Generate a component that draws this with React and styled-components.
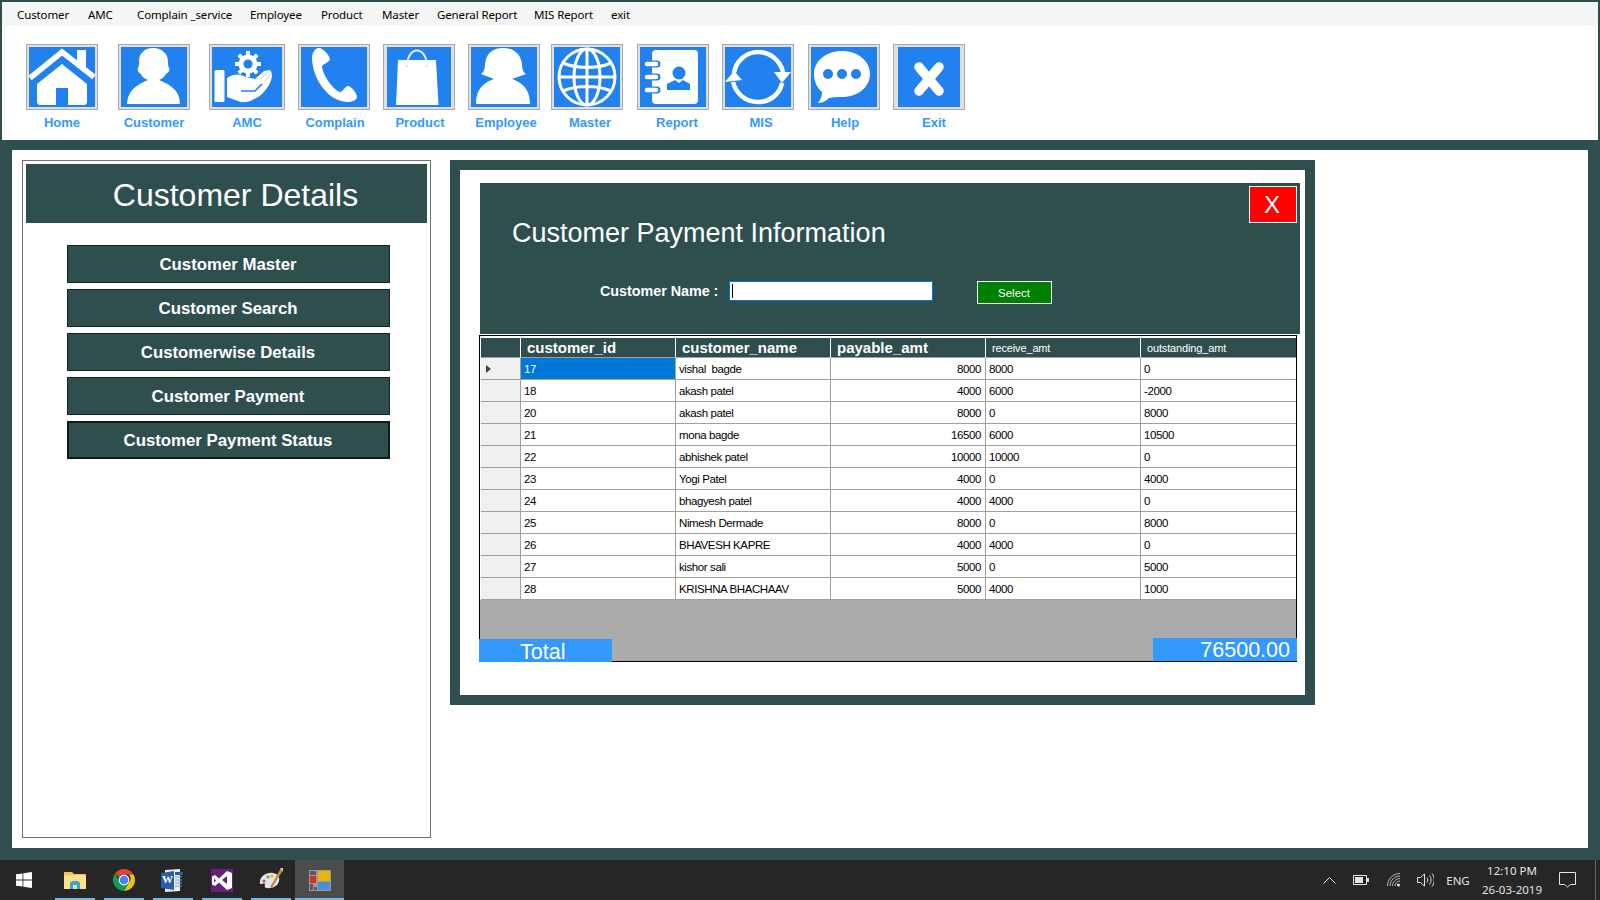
import React from "react";
import styled, { createGlobalStyle } from "styled-components";

const GlobalStyle = createGlobalStyle`
  html, body {
    margin: 0;
    padding: 0;
    background: #2f4f4f;
  }
  * {
    box-sizing: border-box;
  }
`;

const Page = styled.div`
  width: 1600px;
  height: 900px;
  display: flex;
  flex-direction: column;
  padding-top: 2px;
  background: #2f4f4f;
  overflow: hidden;
  font-family: "Liberation Sans", Arial, sans-serif;
`;

const MenuBar = styled.nav`
  height: 24px;
  margin: 0 2px;
  padding-left: 6px;
  display: flex;
  align-items: center;
  background: #f5f5f5;
  font-family: "Noto Sans", "Open Sans", sans-serif;
  font-size: 11.5px;
  letter-spacing: -0.12px;
  color: #000;
`;

const MenuItem = styled.span`
  width: ${(p) => p.$w}px;
  padding-left: 9px;
  white-space: nowrap;
`;

const ToolStrip = styled.div`
  height: 114px;
  margin: 0 2px;
  padding: 18px 0 0 24px;
  display: flex;
  background: #fff;
`;

const Tool = styled.div`
  margin-left: ${(p) => p.$gap}px;
  display: flex;
  flex-direction: column;
  align-items: center;
`;

const IconBox = styled.div`
  width: ${(p) => p.$w}px;
  height: 66px;
  display: flex;
  align-items: center;
  justify-content: center;
  background: #e0e0e0;
  border: 1px solid #a9a9a9;
`;

const IconArt = styled.svg`
  display: block;
  background: #2181ee;
`;

const ToolLabel = styled.span`
  margin-top: 5px;
  padding-left: ${(p) => (p.$shift || 0) * 2}px;
  line-height: 16px;
  font-size: 13px;
  font-weight: 700;
  color: #3399ff;
  white-space: nowrap;
`;

const Main = styled.main`
  height: 698px;
  margin: 10px 12px 0;
  padding: 10px;
  display: flex;
  background: #fff;
`;

const SidePanel = styled.aside`
  width: 409px;
  height: 678px;
  padding: 3px;
  border: 1px solid #707070;
`;

const SideHeader = styled.h1`
  height: 59px;
  margin: 0;
  padding: 4px 0 0 18px;
  display: flex;
  align-items: center;
  justify-content: center;
  background: #2f4f4f;
  color: #fff;
  font-size: 32px;
  font-weight: 400;
`;

const SideMenu = styled.div`
  width: 323px;
  margin: 22px 0 0 41px;
  display: flex;
  flex-direction: column;
  gap: 6px;
`;

const SideButton = styled.button`
  height: 38px;
  padding: 1px 1px 0 0;
  background: #2f4f4f;
  border: ${(p) => (p.$focused ? "2px solid #0c1c1c" : "1px solid #142424")};
  color: #fff;
  font-family: inherit;
  font-size: 16.8px;
  font-weight: 700;
`;

const ContentFrame = styled.section`
  width: 865px;
  height: 545px;
  margin-left: 19px;
  padding: 13px 5px 0 20px;
  border: 10px solid #2f4f4f;
  background: #fff;
`;

const FormHeader = styled.div`
  height: 151px;
  background: #2f4f4f;
  color: #fff;
`;

const TitleRow = styled.div`
  display: flex;
  justify-content: space-between;
  align-items: flex-start;
  padding: 3px 3px 0 32px;
`;

const FormTitle = styled.h2`
  margin: 31px 0 0;
  font-size: 27px;
  line-height: 32px;
  font-weight: 400;
`;

const CloseButton = styled.button`
  width: 48px;
  height: 37px;
  padding: 0 2px 0 0;
  background: #f00;
  border: 1px solid #fff;
  color: #fff;
  font-family: inherit;
  font-size: 24px;
`;

const SearchRow = styled.div`
  margin-top: 31px;
  display: flex;
  align-items: center;
  padding-left: 120px;
  height: 24px;
`;

const SearchLabel = styled.label`
  width: 129px;
  margin-top: -2px;
  font-size: 14.3px;
  font-weight: 700;
  white-space: nowrap;
`;

const SearchField = styled.div`
  width: 204px;
  height: 20px;
  margin-top: -2px;
  padding: 2px 0 0 2px;
  background: #fff;
  border: 1px solid #0078d7;
`;

const Caret = styled.div`
  width: 1px;
  height: 14px;
  background: #000;
`;

const SelectButton = styled.button`
  width: 75px;
  height: 23px;
  margin-left: 44px;
  padding: 1px 1px 0 0;
  background: #008000;
  border: 1px solid #fff;
  color: #fff;
  font-family: inherit;
  font-size: 11.5px;
`;

const GridWrap = styled.div`
  position: relative;
  width: 818px;
  height: 327px;
  margin: 1px 0 0 -1px;
  background: #ababab;
  border: 1px solid #000;
`;

const Table = styled.table`
  width: 816px;
  table-layout: fixed;
  border-collapse: separate;
  border-spacing: 0;
  border-top: 2px solid #fff;
  border-left: 1px solid #fff;
  background: #fff;
  font-size: 11.5px;
  letter-spacing: -0.4px;
  color: #000;
`;

const HeadCell = styled.th`
  height: 20px;
  padding: 0 0 0 6px;
  background: #2f4f4f;
  border-right: 1px solid #fff;
  border-bottom: 1px solid #a0a0a0;
  color: #fff;
  text-align: left;
  letter-spacing: ${(p) => (p.$small ? "-0.15px" : "0")};
  font-size: ${(p) => (p.$small ? "11px" : "15px")};
  font-weight: ${(p) => (p.$small ? 400 : 700)};
  &:last-child {
    border-right: 0;
  }
`;

const Cell = styled.td`
  height: 22px;
  padding: 0 4px 0 3px;
  border-right: 1px solid #a0a0a0;
  border-bottom: 1px solid #a0a0a0;
  text-align: ${(p) => (p.$right ? "right" : "left")};
  white-space: pre;
  background: ${(p) => (p.$active ? "#0078d7" : "#fff")};
  color: ${(p) => (p.$active ? "#fff" : "#000")};
  &:last-child {
    border-right: 0;
  }
`;

const RowHead = styled.td`
  height: 22px;
  padding: 0 0 0 5px;
  background: #f0f0f0;
  border-right: 1px solid #a0a0a0;
  border-bottom: 1px solid #a0a0a0;
`;

const RowArrow = styled.div`
  width: 0;
  height: 0;
  border-left: 5px solid #404040;
  border-top: 4px solid transparent;
  border-bottom: 4px solid transparent;
`;

const TotalBar = styled.div`
  position: absolute;
  left: -1px;
  right: -1px;
  bottom: -1px;
  display: flex;
  justify-content: space-between;
  align-items: flex-end;
`;

const TotalLabel = styled.div`
  width: 133px;
  height: 23px;
  padding-left: 41px;
  background: #3399ff;
  color: #fff;
  font-size: 21.5px;
  line-height: 27px;
`;

const TotalValue = styled.div`
  width: 144px;
  height: 23px;
  margin-bottom: 1px;
  padding-right: 7px;
  background: #3399ff;
  color: #fff;
  font-size: 21.5px;
  line-height: 25px;
  text-align: right;
`;

const Taskbar = styled.footer`
  height: 40px;
  margin-top: 12px;
  display: flex;
  align-items: stretch;
  background: #262626;
  color: #e4e4e4;
  font-family: "Noto Sans", "Open Sans", sans-serif;
`;

const StartButton = styled.div`
  width: 50px;
  display: flex;
  align-items: center;
  justify-content: center;
  padding-right: 2px;
`;

const TaskSlot = styled.div`
  position: relative;
  width: 49px;
  display: flex;
  align-items: center;
  justify-content: center;
  background: ${(p) => (p.$active ? "#4c4c4c" : "transparent")};
  &::after {
    content: "";
    position: absolute;
    left: ${(p) => (p.$active ? 0 : 5)}px;
    right: ${(p) => (p.$active ? 0 : 4)}px;
    bottom: 0;
    height: 2px;
    background: #76b9ed;
  }
`;

const Tray = styled.div`
  margin-left: auto;
  display: flex;
  align-items: stretch;
  padding-right: 4px;
`;

const TraySlot = styled.div`
  width: ${(p) => p.$w}px;
  display: flex;
  flex-direction: column;
  align-items: center;
  justify-content: center;
  font-size: 11.5px;
  line-height: 19px;
  white-space: nowrap;
`;

const TrayDivider = styled.div`
  width: 1px;
  margin-left: 10px;
  background: #666;
`;

const menus = [
  ["Customer", 71],
  ["AMC", 49],
  ["Complain _service", 113],
  ["Employee", 71],
  ["Product", 61],
  ["Master", 55],
  ["General Report", 97],
  ["MIS Report", 77],
  ["exit", 40],
];

const Gear = ({ cx, cy }) => (
  <g>
    {[0, 45, 90, 135, 180, 225, 270, 315].map((a) => (
      <rect key={a} x={cx - 2} y={cy - 13} width="4" height="5" fill="#fff" transform={`rotate(${a} ${cx} ${cy})`} />
    ))}
    <circle cx={cx} cy={cy} r="9.500" fill="#fff" />
    <circle cx={cx} cy={cy} r="4.500" fill="#2181ee" />
  </g>
);

const toolIcons = {
  home: (
    <>
      <path d="M48 3h9v18h-9z" fill="#fff" />
      <path d="M1 31 33 5l32 25" fill="none" stroke="#fff" strokeWidth="5.5" />
      <path d="M33 17 58 37v19l-2 2H10l-2-2V37zM27 41v17h12V41z" fill="#fff" fillRule="evenodd" />
    </>
  ),
  customer: (
    <path
      d="M32 1c9 0 15 6 15 13 0 3 0 5 1 7 1 3-1 5-3 6-2 3-3 4-5 5l-2 1c9 4 21 9 21 24H6c1-15 12-20 21-24l-2-1c-2-1-4-2-5-5-2-1-4-3-3-6 1-2 1-4 1-7C18 7 23 1 32 1z"
      fill="#fff"
    />
  ),
  amc: (
    <>
      <Gear cx={36} cy={17} />
      <rect x="2.5" y="23" width="10" height="32" rx="1.5" fill="#fff" />
      <path
        d="M15 31c7-5 13-4 19-1l9 2 9-8 6-1c3 3 2 9 0 13-4 8-10 14-16 16-6 4-12 4-16 2L15 50z"
        fill="#fff"
      />
      <path d="M29 44h14l7-7" fill="none" stroke="#2181ee" strokeWidth="1.6" />
      <path d="M49 32l7-7M53 34l6-7" fill="none" stroke="#c4c9d0" strokeWidth="1" />
    </>
  ),
  complain: (
    <path
      d="M18 1c4 0 10 7 11 11 0 3-7 5-8 7 0 8 11 24 18 26 3 0 5-6 8-6 3 0 9 7 9 11 0 3-5 5-10 5C26 54 11 30 11 11c0-5 3-10 7-10z"
      fill="#fff"
    />
  ),
  product: (
    <>
      <path d="M20 20c0-22 20-22 20 0" fill="none" stroke="#e6e9ee" strokeWidth="2" />
      <path d="M11 13h38l2.500 45H9z" fill="#fff" />
      <circle cx="20" cy="19" r="1.300" fill="#dfe3e8" />
      <circle cx="40" cy="19" r="1.300" fill="#dfe3e8" />
    </>
  ),
  employee: (
    <path
      d="M32 1c12 0 18 7 19 16 0 6 2 9 4 10l-14 5c8 3 18 8 18 25H5c0-17 10-22 18-25L10 27c3-2 4-6 4-10C15 7 21 1 32 1z"
      fill="#fff"
    />
  ),
  master: (
    <g fill="none" stroke="#fff" strokeWidth="3">
      <circle cx="33" cy="30" r="28" />
      <ellipse cx="33" cy="30" rx="13" ry="28" />
      <path d="M33 2v56M5 30h56M9 16c14 6 34 6 48 0M9 44c14-6 34-6 48 0" />
    </g>
  ),
  report: (
    <>
      <rect x="12" y="3" width="46" height="54" rx="4" fill="#fff" />
      <g stroke="#2181ee" strokeWidth="7" strokeLinecap="round">
        <path d="M7 17h10M7 30h10M7 43h10" />
      </g>
      <g stroke="#fff" strokeWidth="4.500" strokeLinecap="round">
        <path d="M7 17h9M7 30h9M7 43h9" />
      </g>
      <circle cx="39" cy="26" r="6.500" fill="#2181ee" />
      <path d="M27 43v-6l8-4 4 3 4-3 7 4v6z" fill="#2181ee" />
    </>
  ),
  mis: (
    <g fill="#fff">
      <path d="M9 26C11 14 21 5 33 5c12 0 22 8 25 20" fill="none" stroke="#fff" strokeWidth="4.500" />
      <path d="M49 25h17L57 36z" />
      <path d="M57 36C55 47 45 55 33 55 21 55 11 47 8 35" fill="none" stroke="#fff" strokeWidth="4.500" />
      <path d="M0 35l9-11 8 9z" />
    </g>
  ),
  help: (
    <>
      <path d="M31 4c16 0 28 10 28 23S47 50 31 50c-5 0-9 0-13 1-3 3-7 5-11 5 2-3 4-6 4-11C6 41 3 34 3 27 3 14 15 4 31 4z" fill="#fff" />
      <circle cx="17" cy="27" r="5" fill="#2181ee" />
      <circle cx="31" cy="27" r="5" fill="#2181ee" />
      <circle cx="45" cy="27" r="5" fill="#2181ee" />
    </>
  ),
  exit: <path d="M21 20l20 24M41 20 21 44" fill="none" stroke="#fff" strokeWidth="9.500" strokeLinecap="round" />,
};

const tools = [
  { key: "home", label: "Home", gap: 0, box: 72, art: 66 },
  { key: "customer", label: "Customer", gap: 20, box: 72, art: 66 },
  { key: "amc", label: "AMC", gap: 19, box: 76, art: 70 },
  { key: "complain", label: "Complain", gap: 13, box: 72, art: 66, shift: 1 },
  { key: "product", label: "Product", gap: 13, box: 72, art: 64, shift: 1 },
  { key: "employee", label: "Employee", gap: 13, box: 72, art: 66, shift: 2 },
  { key: "master", label: "Master", gap: 11, box: 72, art: 66, shift: 3 },
  { key: "report", label: "Report", gap: 14, box: 72, art: 66, shift: 4 },
  { key: "mis", label: "MIS", gap: 13, box: 72, art: 66, shift: 3 },
  { key: "help", label: "Help", gap: 14, box: 72, art: 66, shift: 1 },
  { key: "exit", label: "Exit", gap: 13, box: 72, art: 62, shift: 5 },
];

const sideButtons = [
  "Customer Master",
  "Customer Search",
  "Customerwise Details",
  "Customer Payment",
  "Customer Payment Status",
];

const payments = [
  ["17", "vishal  bagde", "8000", "8000", "0"],
  ["18", "akash patel", "4000", "6000", "-2000"],
  ["20", "akash patel", "8000", "0", "8000"],
  ["21", "mona bagde", "16500", "6000", "10500"],
  ["22", "abhishek patel", "10000", "10000", "0"],
  ["23", "Yogi Patel", "4000", "0", "4000"],
  ["24", "bhagyesh patel", "4000", "4000", "0"],
  ["25", "Nimesh Dermade", "8000", "0", "8000"],
  ["26", "BHAVESH KAPRE", "4000", "4000", "0"],
  ["27", "kishor sali", "5000", "0", "5000"],
  ["28", "KRISHNA BHACHAAV", "5000", "4000", "1000"],
];

const WindowsLogo = () => (
  <svg width="16" height="16" viewBox="0 0 16 16" fill="#fff">
    <path d="M0 2.300 6.500 1.400v6.200H0zM7.300 1.300 16 0v7.600H7.300zM0 8.400h6.500v6.200L0 13.700zM7.300 8.400H16V16l-8.700-1.300z" />
  </svg>
);

const ExplorerIcon = () => (
  <svg width="22" height="18" viewBox="0 0 22 18">
    <path d="M0 1h8l2 2h12v15H0z" fill="#f4c542" />
    <path d="M0 4h22v14H0z" fill="#ffe08a" />
    <path d="M6 18v-6l2-2h6l2 2v6h-3v-4H9v4z" fill="#36a5dc" />
    <path d="M6 12h10v2H6z" fill="#36a5dc" />
  </svg>
);

const ChromeIcon = () => (
  <svg width="22" height="22" viewBox="0 0 22 22">
    <path d="M11 0a11 11 0 0 1 9.500 5.500H11a5.500 5.500 0 0 0-5 3.200L2.300 4.300A11 11 0 0 1 11 0z" fill="#db4437" />
    <path d="M20.500 5.500A11 11 0 0 1 11 22l4.700-8.200a5.500 5.500 0 0 0 0-8.300z" fill="#f4c20d" />
    <path d="M2.300 4.300 6.800 13.500a5.500 5.500 0 0 0 8.900.300L11 22A11 11 0 0 1 2.300 4.300z" fill="#0f9d58" />
    <circle cx="11" cy="11" r="5.400" fill="#fff" />
    <circle cx="11" cy="11" r="4.300" fill="#4285f4" />
  </svg>
);

const WordIcon = () => (
  <svg width="23" height="23" viewBox="0 0 23 23">
    <path d="M4 1l15-1v22L4 23z" fill="#e8eef7" />
    <path d="M0 4l13-2v19L0 19z" fill="#2a5caa" />
    <path d="M14 8h7M14 11h7M14 14h7M14 17h7" stroke="#7e9ccb" strokeWidth="1" />
    <path d="M14 3h8v3h-8z" fill="#2a5caa" />
    <text x="6.500" y="14" textAnchor="middle" fontSize="11" fontWeight="700" fontFamily="Liberation Serif, serif" fill="#fff">
      W
    </text>
  </svg>
);

const StudioIcon = () => (
  <svg width="22" height="23" viewBox="0 0 22 23">
    <path d="M0 0h22v23H0z" fill="#68217a" />
    <path d="M16 2l5 2v15l-5 2-8-7.500L4 17l-3-1.500v-8L4 6l4 3.500zM16 7l-5 4 5 4zM3 9.500v4l2-2z" fill="#fff" fillRule="evenodd" />
  </svg>
);

const PaintIcon = () => (
  <svg width="24" height="24" viewBox="0 0 24 24">
    <path d="M1 14C1 8 8 4 14 5c5 1 7 4 6 8-1 5-7 8-12 7-2 0-3-1-2-3 0-2-1-2-3-1-1 0-3 0-2-2z" fill="#dfe7ee" />
    <circle cx="5" cy="13" r="1.500" fill="#d8443a" />
    <circle cx="9" cy="9" r="1.700" fill="#7cb342" />
    <circle cx="13" cy="8" r="1.700" fill="#f2b632" />
    <path d="M22 0 24 2 13 20l-2-1z" fill="#c58a3e" />
    <path d="M21 0h3v4z" fill="#e6c98f" />
  </svg>
);

const AppIcon = () => (
  <svg width="22" height="21" viewBox="0 0 22 21">
    <path d="M0 0h22v21H0z" fill="#9a9a9a" />
    <path d="M1 1h6v4H1zM1 14h3v6H1zM5 17h3v3H5z" fill="#5c5c5c" />
    <path d="M1 6h6v7H1z" fill="#d22f27" />
    <path d="M9 1h12v10H9z" fill="#eab308" />
    <path d="M9 12h12v8H9z" fill="#4a8fdc" />
  </svg>
);

const taskIcons = [ExplorerIcon, ChromeIcon, WordIcon, StudioIcon, PaintIcon, AppIcon];

const App = () => (
  <Page>
    <GlobalStyle />
    <MenuBar>
      {menus.map(([name, w]) => (
        <MenuItem key={name} $w={w}>
          {name}
        </MenuItem>
      ))}
    </MenuBar>

    <ToolStrip>
      {tools.map((t) => (
        <Tool key={t.key} $gap={t.gap}>
          <IconBox $w={t.box}>
            <IconArt width={t.art} height="60" viewBox={`0 0 ${t.art} 60`}>
              {toolIcons[t.key]}
            </IconArt>
          </IconBox>
          <ToolLabel $shift={t.shift}>{t.label}</ToolLabel>
        </Tool>
      ))}
    </ToolStrip>

    <Main>
      <SidePanel>
        <SideHeader>Customer Details</SideHeader>
        <SideMenu>
          {sideButtons.map((b, i) => (
            <SideButton key={b} $focused={i === sideButtons.length - 1}>
              {b}
            </SideButton>
          ))}
        </SideMenu>
      </SidePanel>

      <ContentFrame>
        <FormHeader>
          <TitleRow>
            <FormTitle>Customer Payment Information</FormTitle>
            <CloseButton>X</CloseButton>
          </TitleRow>
          <SearchRow>
            <SearchLabel>Customer Name :</SearchLabel>
            <SearchField>
              <Caret />
            </SearchField>
            <SelectButton>Select</SelectButton>
          </SearchRow>
        </FormHeader>

        <GridWrap>
          <Table>
            <colgroup>
              <col style={{ width: 40 }} />
              <col style={{ width: 155 }} />
              <col style={{ width: 155 }} />
              <col style={{ width: 155 }} />
              <col style={{ width: 155 }} />
              <col style={{ width: 155 }} />
            </colgroup>
            <thead>
              <tr>
                <HeadCell />
                <HeadCell>customer_id</HeadCell>
                <HeadCell>customer_name</HeadCell>
                <HeadCell>payable_amt</HeadCell>
                <HeadCell $small>receive_amt</HeadCell>
                <HeadCell $small>outstanding_amt</HeadCell>
              </tr>
            </thead>
            <tbody>
              {payments.map((row, i) => (
                <tr key={row[0]}>
                  <RowHead>{i === 0 && <RowArrow />}</RowHead>
                  <Cell $active={i === 0}>{row[0]}</Cell>
                  <Cell>{row[1]}</Cell>
                  <Cell $right>{row[2]}</Cell>
                  <Cell>{row[3]}</Cell>
                  <Cell>{row[4]}</Cell>
                </tr>
              ))}
            </tbody>
          </Table>
          <TotalBar>
            <TotalLabel>Total</TotalLabel>
            <TotalValue>76500.00</TotalValue>
          </TotalBar>
        </GridWrap>
      </ContentFrame>
    </Main>

    <Taskbar>
      <StartButton>
        <WindowsLogo />
      </StartButton>
      {taskIcons.map((Icon, i) => (
        <TaskSlot key={i} $active={i === taskIcons.length - 1}>
          <Icon />
        </TaskSlot>
      ))}
      <Tray>
        <TraySlot $w={32}>
          <svg width="13" height="8" viewBox="0 0 13 8" fill="none" stroke="#e4e4e4" strokeWidth="1">
            <path d="M.5 7.500 6.500 1.500l6 6" />
          </svg>
        </TraySlot>
        <TraySlot $w={32}>
          <svg width="16" height="10" viewBox="0 0 16 10">
            <path d="M.5.500h13v9H.5z" fill="none" stroke="#e4e4e4" />
            <path d="M2 2h8v6H2z" fill="#e4e4e4" />
            <path d="M14 3h2v4h-2z" fill="#e4e4e4" />
          </svg>
        </TraySlot>
        <TraySlot $w={33}>
          <svg width="14" height="14" viewBox="0 0 14 14" fill="none" stroke="#bdbdbd" strokeWidth="1">
            <path d="M.5 13C.5 6 6 .5 13 .5M3 13c0-5.500 4.500-10 10-10M5.500 13c0-4 3.500-7.500 7.500-7.500M8 13c0-2.500 2.500-5 5-5" />
            <circle cx="11.500" cy="12" r="1.500" fill="#e4e4e4" stroke="none" />
          </svg>
        </TraySlot>
        <TraySlot $w={31}>
          <svg width="17" height="14" viewBox="0 0 17 14" fill="none" stroke="#e4e4e4" strokeWidth="1">
            <path d="M.5 4.500h3l4-3.500v12l-4-3.500h-3z" />
            <path d="M10 4.500c1 1.500 1 3.500 0 5M12.500 2.500c2 2.500 2 6.500 0 9M15 .5c3 3.500 3 9.500 0 13" />
          </svg>
        </TraySlot>
        <TraySlot $w={34}>ENG</TraySlot>
        <TraySlot $w={74}>
          <span>12:10 PM</span>
          <span>26-03-2019</span>
        </TraySlot>
        <TraySlot $w={36}>
          <svg width="17" height="16" viewBox="0 0 17 16" fill="none" stroke="#e4e4e4" strokeWidth="1">
            <path d="M.5.500h16v12h-5l-3 2.500-3-2.500h-5z" />
          </svg>
        </TraySlot>
        <TrayDivider />
      </Tray>
    </Taskbar>
  </Page>
);

export default App;
